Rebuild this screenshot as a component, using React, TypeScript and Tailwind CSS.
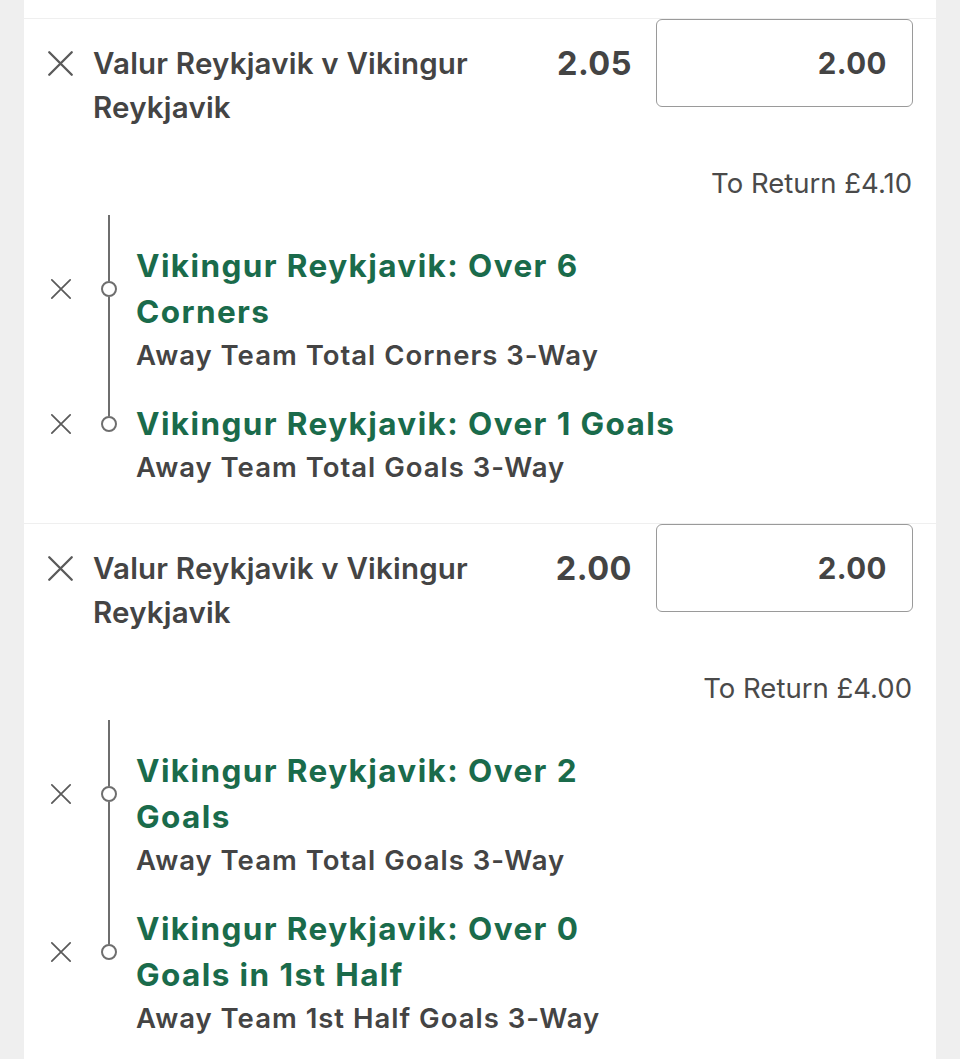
import React from "react";

type Leg = {
  title: string[];
  market: string;
};

type Bet = {
  odds: string;
  stake: string;
  toReturn: string;
  legs: Leg[];
};

const bets: Bet[] = [
  {
    odds: "2.05",
    stake: "2.00",
    toReturn: "£4.10",
    legs: [
      { title: ["Vikingur Reykjavik: Over 6", "Corners"], market: "Away Team Total Corners 3-Way" },
      { title: ["Vikingur Reykjavik: Over 1 Goals"], market: "Away Team Total Goals 3-Way" },
    ],
  },
  {
    odds: "2.00",
    stake: "2.00",
    toReturn: "£4.00",
    legs: [
      { title: ["Vikingur Reykjavik: Over 2", "Goals"], market: "Away Team Total Goals 3-Way" },
      { title: ["Vikingur Reykjavik: Over 0", "Goals in 1st Half"], market: "Away Team 1st Half Goals 3-Way" },
    ],
  },
];

function CloseIcon({ size, stroke }: { size: number; stroke: number }) {
  return (
    <svg width={size} height={size} viewBox="0 0 24 24" fill="none" className="shrink-0">
      <path
        d="M2 2L22 22M22 2L2 22"
        stroke="#5a5a5a"
        strokeWidth={stroke}
        strokeLinecap="round"
      />
    </svg>
  );
}

function LegRow({ leg, last }: { leg: Leg; last: boolean }) {
  return (
    <div className="grid grid-cols-[48px_22px_1fr]">
      {/* title row */}
      <div className="flex items-center pt-[28px]">
        <CloseIcon size={22} stroke={1.9} />
      </div>
      <div className="flex flex-col items-center">
        <div className="h-[28px] w-[2px] bg-[#6e6e6e]" />
        <div className="flex flex-1 flex-col items-center">
          <div className="w-[2px] flex-1 bg-[#6e6e6e]" />
          <div className="h-[16px] w-[16px] shrink-0 rounded-full border-2 border-[#6e6e6e] bg-white" />
          <div className={`w-[2px] flex-1 ${last ? "bg-transparent" : "bg-[#6e6e6e]"}`} />
        </div>
      </div>
      <div className="pl-4 pt-[28px] text-[31.5px] font-bold leading-[46px] tracking-[1.4px] text-[#1a6b4b]">
        {leg.title.map((line) => (
          <div key={line}>{line}</div>
        ))}
      </div>

      {/* market row */}
      <div />
      <div className="flex justify-center">
        {!last && <div className="w-[2px] bg-[#6e6e6e]" />}
      </div>
      <div className="pl-4 pt-[2px] text-[27.5px] font-semibold leading-[36px] tracking-[1px] text-[#444]">
        {leg.market}
      </div>
    </div>
  );
}

function BetBlock({ bet }: { bet: Bet }) {
  return (
    <section className="border-t border-[#efefef] pb-[38px]">
      <div className="flex items-start pl-[23px] pr-[23px]">
        <div className="flex flex-1 items-start gap-[19px] pt-[22px]">
          <div className="pt-[9px]">
            <CloseIcon size={27} stroke={2.1} />
          </div>
          <h3 className="text-[29.5px] font-semibold leading-[44px] tracking-[0.2px] text-[#444]">
            Valur Reykjavik v Vikingur
            <br />
            Reykjavik
          </h3>
        </div>
        <div className="pr-[24px] pt-[23px] text-[32.5px] font-bold leading-[44px] tracking-[0.5px] text-[#444]">
          {bet.odds}
        </div>
        <div className="flex h-[88px] w-[257px] items-center justify-end rounded-[6px] border-[1.5px] border-[#9a9a9a] pr-[25px] text-[29.5px] font-bold tracking-[0.5px] text-[#444]">
          {bet.stake}
        </div>
      </div>

      <div className="mt-[36px] pr-[24px] text-right text-[27.5px] leading-[36px] text-[#4a4a4a]">
        To Return {bet.toReturn}
      </div>

      <div className="mt-[14px] pl-[26px]">
        {bet.legs.map((leg, i) => (
          <LegRow key={i} leg={leg} last={i === bet.legs.length - 1} />
        ))}
      </div>
    </section>
  );
}

export default function App() {
  return (
    <div
      className="flex min-h-[1059px] bg-[#efefef]"
      style={{ fontFamily: "Inter, 'Noto Sans', sans-serif" }}
    >
      <div className="ml-[24px] w-[912px] overflow-hidden bg-white pt-[18px]">
        {bets.map((bet, i) => (
          <BetBlock key={i} bet={bet} />
        ))}
      </div>
    </div>
  );
}
